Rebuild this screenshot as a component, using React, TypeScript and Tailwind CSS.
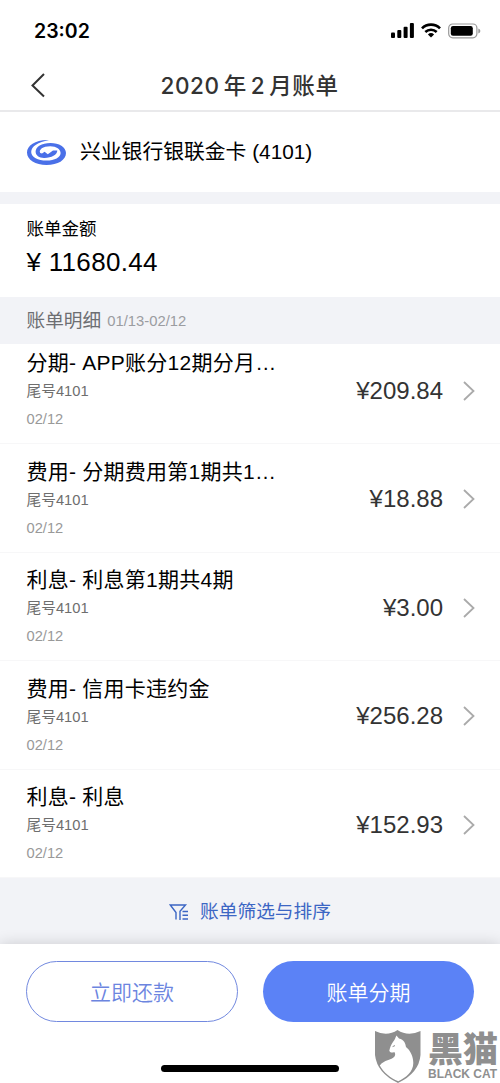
import clsx from 'clsx';

const entries = [
  { title: '分期- APP账分12期分月…', card: '尾号4101', date: '02/12', amount: '¥209.84' },
  { title: '费用- 分期费用第1期共1…', card: '尾号4101', date: '02/12', amount: '¥18.88' },
  { title: '利息- 利息第1期共4期', card: '尾号4101', date: '02/12', amount: '¥3.00' },
  { title: '费用- 信用卡违约金', card: '尾号4101', date: '02/12', amount: '¥256.28' },
  { title: '利息- 利息', card: '尾号4101', date: '02/12', amount: '¥152.93' },
];

function StatusBar() {
  return (
    <div className="flex h-[60px] items-center justify-between pr-[19px] pl-[34px]">
      <span className="pt-[3px] font-['Inter',sans-serif] text-[19.5px] font-semibold text-black">
        23:02
      </span>
      <div className="flex items-center gap-[7px] pt-px">
        <svg width="23" height="15" viewBox="0 0 23 15">
          <rect x="0" y="9.5" width="4" height="5.5" rx="1" />
          <rect x="6.3" y="7" width="4" height="8" rx="1" />
          <rect x="12.6" y="3.7" width="4" height="11.3" rx="1" />
          <rect x="18.9" y="0" width="4" height="15" rx="1" />
        </svg>
        <svg width="20" height="15" viewBox="0 0 20 15" fill="none" stroke="#000">
          <path d="M1 5.4 A12.8 12.8 0 0 1 19 5.4" strokeWidth="2.7" />
          <path d="M4.3 9 A8.2 8.2 0 0 1 15.7 9" strokeWidth="2.5" />
          <path d="M10 14.6 L6.9 11.5 A4.6 4.6 0 0 1 13.1 11.5 Z" fill="#000" stroke="none" />
        </svg>
        <svg width="33" height="16" viewBox="0 0 33 16">
          <rect x="0.7" y="1" width="28.2" height="13.8" rx="4" fill="none" stroke="#999" strokeWidth="1.2" />
          <rect x="2.8" y="3" width="22" height="9.8" rx="2.2" />
          <path d="M30.3 5.4 Q32.4 6 32.4 7.9 Q32.4 9.8 30.3 10.4 Z" fill="#999" />
        </svg>
      </div>
    </div>
  );
}

function BankLogo() {
  return (
    <svg width="41" height="27" viewBox="0 0 41 27">
      <path
        d="M23 1 C10 .4 1 6.2 1 13.5 C1 21 9.5 26 20.5 26 C32 26 40 21 40 14 C40 7.8 33 3.9 24.5 3.9 C15.5 3.9 9.6 7.8 9.6 12.6 C9.6 16.8 13.5 19.2 18.5 19 C25.5 18.8 31.3 16 31.3 11.6 L27 11.6 L21.8 15.3 L18.6 12.7 L16 14.6 L14.2 14 C12.4 10.6 17 7.2 24.2 7.2 C30.5 7.2 34.6 10.2 34.6 14 C34.6 18.4 28.8 21.6 20.5 21.6 C12 21.6 5.2 18.2 5.2 13 C5.2 7.3 12 3.2 23 1 Z"
        fill="#4a70e8"
      />
    </svg>
  );
}

function BlackCat() {
  return (
    <div className="absolute right-0 bottom-0 flex h-[54px] w-[125px] gap-[7px] text-[#8f8f8f]">
      <svg className="shrink-0" width="46" height="54" viewBox="0 0 46 54">
        <path
          d="M0 2 Q12 8 22.5 1 Q33 8 45.5 2 V26 Q44 44 23 54 Q2 44 0 26 Z"
          fill="currentColor"
        />
        <path
          d="M21.5 6.5 L24 9.5 C29 10.5 30.5 14.5 31 18 C35.5 21.5 38.3 27.5 38.3 34 C38.3 43 31 48.5 23.3 52.3 C15.5 49 8.5 43.5 4.8 36.5 C9 30.5 16.5 31.5 19.5 27.5 C20.6 26 20.3 24.2 19.3 23 C17 24 15 23.8 14.3 21.8 C15 19 15.8 15.8 18.3 12.6 C19.8 10.8 20.4 8.6 21.5 6.5 Z"
          fill="#fff"
        />
        <path d="M17.6 17.6 L20 16.6" stroke="currentColor" strokeWidth="1" />
      </svg>
      <div className="flex flex-col whitespace-nowrap">
        <span className="font-['Noto_Sans_CJK_SC',sans-serif] text-[35px] leading-[35px] font-black">
          黑猫
        </span>
        <span className="mt-[3px] font-['Liberation_Sans',sans-serif] text-[12px] leading-[14px] font-bold">
          BLACK CAT
        </span>
      </div>
    </div>
  );
}

export default function App() {
  return (
    <div className="relative flex h-[1083px] w-[500px] flex-col overflow-hidden bg-white font-['Liberation_Sans','Noto_Sans_CJK_SC',sans-serif] text-black">
      <StatusBar />

      <header className="flex h-[52px] items-center border-b-2 border-[#e9e9eb] pl-[30px]">
        <svg width="16" height="26" viewBox="0 0 16 26" fill="none" stroke="#333" strokeWidth="2">
          <path d="M14 2 L2.5 13.5 L14 24.5" />
        </svg>
        <h1 className="ml-[114.5px] flex items-center pt-0.5 font-['Inter','Noto_Sans_CJK_SC',sans-serif] text-[22.5px] font-medium tracking-[0.6px] whitespace-nowrap text-[#333]">
          <span>2020</span>
          <span className="ml-1">年</span>
          <span className="ml-1">2</span>
          <span className="ml-1">月账单</span>
        </h1>
      </header>

      <div className="flex h-20 items-center gap-[13px] pl-[26px] text-[20.8px]">
        <BankLogo />
        <span>兴业银行银联金卡 (4101)</span>
      </div>

      <div className="h-3 bg-[#f2f3f7]" />

      <section className="flex h-[93px] flex-col pt-[13px] pl-[26.5px]">
        <span className="text-[17.5px] leading-6">账单金额</span>
        <span className="mt-[3px] text-[26px] leading-9 tracking-[0.3px]">¥ 11680.44</span>
      </section>

      <div className="flex h-[47px] items-center gap-1.5 bg-[#f2f3f7] pt-0.5 pl-[26.5px]">
        <span className="text-[18.7px] text-[#6d6e72]">账单明细</span>
        <span className="text-[14.8px] text-[#9b9ca1]">01/13-02/12</span>
      </div>

      <ul>
        {entries.map((entry, i) => (
          <li
            key={i}
            className={clsx(
              'flex justify-between border-b border-[#f7f7f8] pr-[25px] pl-[26.5px]',
              i === 0 ? 'h-[100px] pt-[3px]' : 'h-[108.5px] pt-[11.5px]'
            )}
          >
            <div className="flex flex-col">
              <span className="text-[21px] leading-8 tracking-[0.25px] whitespace-nowrap">{entry.title}</span>
              <span className="text-[14.7px] leading-6 text-[#6e6e6e]">{entry.card}</span>
              <span className="mt-1 text-[14.7px] leading-6 text-[#999]">{entry.date}</span>
            </div>
            <div className="flex h-[87px] items-center text-[24px] text-[#333]">
              {entry.amount}
              <svg className="ml-5" width="12" height="20" viewBox="0 0 12 20" fill="none" stroke="#aaa" strokeWidth="1.8">
                <path d="M1 1 L10.5 10 L1 19" />
              </svg>
            </div>
          </li>
        ))}
      </ul>

      <div className="flex h-[66px] items-center justify-center gap-[11px] bg-[#f2f3f7] pt-0.5 text-[18.7px] text-[#3c66c4]">
        <svg width="20" height="17" viewBox="0 0 20 17" fill="none" stroke="currentColor" strokeWidth="1.4">
          <path d="M7 15.5 V8.5 L1.3 1 H16.5 L11 7.2 V16" />
          <path d="M13.5 7.5 H19 M13.5 11.2 H19 M13.5 15 H19" />
        </svg>
        <span>账单筛选与排序</span>
      </div>

      <footer className="flex flex-1 gap-[25px] bg-white px-[26px] pt-[17px] shadow-[0_0_14px_rgba(0,0,0,0.16)]">
        <button className="h-[61px] w-[212px] rounded-full border-[1.5px] border-[#7289df] pt-0.5 text-[21px] font-[350] text-[#6c85df]">
          立即还款
        </button>
        <button className="h-[61px] w-[211px] rounded-full bg-[#5b82f6] pt-0.5 text-[21px] font-[350] text-white">
          账单分期
        </button>
      </footer>

      <div className="absolute bottom-[11px] left-[161px] h-[7px] w-[178px] rounded-full bg-black" />
      <BlackCat />
    </div>
  );
}
